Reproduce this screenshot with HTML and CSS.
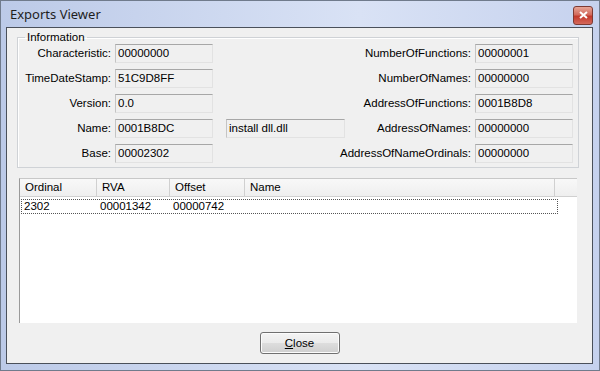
FILE: index.html
```html
<!DOCTYPE html>
<html lang="en">
<head>
    <meta charset="UTF-8">
    <title>Exports Viewer</title>
    <link rel="stylesheet" href="styles.css">
</head>
<body>
    <div class="window">
        <div class="titlebar">
            <span class="title">Exports Viewer</span>
            <div class="close-x">
                <svg width="9" height="8" viewBox="0 0 9 8">
                    <path d="M1 1 L8 7 M8 1 L1 7" stroke="#fff" stroke-width="2" />
                </svg>
            </div>
        </div>
        <div class="client">
            <fieldset class="info">
                <legend>Information</legend>
                <div class="fields">
                    <label>Characteristic:</label>
                    <div class="box">00000000</div>
                    <div></div>
                    <label>NumberOfFunctions:</label>
                    <div class="box">00000001</div>

                    <label>TimeDateStamp:</label>
                    <div class="box">51C9D8FF</div>
                    <div></div>
                    <label>NumberOfNames:</label>
                    <div class="box">00000000</div>

                    <label>Version:</label>
                    <div class="box">0.0</div>
                    <div></div>
                    <label>AddressOfFunctions:</label>
                    <div class="box">0001B8D8</div>

                    <label>Name:</label>
                    <div class="box">0001B8DC</div>
                    <div class="box wide">install dll.dll</div>
                    <label>AddressOfNames:</label>
                    <div class="box">00000000</div>

                    <label>Base:</label>
                    <div class="box">00002302</div>
                    <div></div>
                    <label>AddressOfNameOrdinals:</label>
                    <div class="box">00000000</div>
                </div>
            </fieldset>

            <div class="list">
                <div class="list-head">
                    <div class="col c-ord">Ordinal</div>
                    <div class="col c-rva">RVA</div>
                    <div class="col c-off">Offset</div>
                    <div class="col c-name">Name</div>
                    <div class="col c-stub"></div>
                </div>
                <div class="list-row">
                    <div class="col c-ord">2302</div>
                    <div class="col c-rva">00001342</div>
                    <div class="col c-off">00000742</div>
                    <div class="col c-name"></div>
                </div>
            </div>

            <div class="footer">
                <button class="btn"><u>C</u>lose</button>
            </div>
        </div>
    </div>
</body>
</html>
```

FILE: styles.css
```css
body {
    margin: 0;
    font-family: "Liberation Sans", Arial, sans-serif;
    font-size: 11.5px;
    color: #000;
}
.window {
    width: 600px;
    height: 371px;
    box-sizing: border-box;
    display: flex;
    flex-direction: column;
    padding: 0 6px 6px 5px;
    border: 1px solid #707b8c;
    background: linear-gradient(to right, #bccae8, #d9e2f5 60%, #c6d2ee);
}
.titlebar {
    height: 26px;
    display: flex;
    align-items: center;
    justify-content: space-between;
    padding-left: 4px;
}
.title {
    font-family: "Noto Sans", sans-serif;
    font-size: 13px;
    color: #1e1e1e;
    padding-bottom: 1px;
}
.close-x {
    width: 18px;
    height: 17px;
    margin-top: 2px;
    border: 1px solid #7d3a33;
    border-radius: 3px;
    background: linear-gradient(#e7a596, #d26a5c 45%, #c3392c 55%, #d4695b);
    display: flex;
    align-items: center;
    justify-content: center;
}
.client {
    flex: 1;
    display: flex;
    flex-direction: column;
    border: 1px solid #4a505a;
    background-color: #f0f0f0;
}
.info {
    margin: 3px 13px 0 10px;
    padding: 0 5px 4px 0;
    border: 1px solid #cfd2d6;
    box-shadow: inset 1px 1px 0 #fff;
    min-width: 0;
}
.info legend {
    margin-left: 7px;
    padding: 0 2px;
    line-height: 13px;
}
.fields {
    display: grid;
    grid-template-columns: 97px 98px 132px 130px 98px;
    grid-auto-rows: 19px;
    row-gap: 6px;
}
.fields label {
    display: flex;
    justify-content: flex-end;
    padding-right: 4px;
    line-height: 19px;
    white-space: nowrap;
}
.box {
    box-sizing: border-box;
    height: 19px;
    line-height: 17px;
    padding-left: 2px;
    border: 1px solid #e2e2e2;
    border-top-color: #a7a7a7;
    border-left-color: #c4c4c4;
    white-space: nowrap;
}
.box.wide {
    width: 119px;
    justify-self: end;
}
.list {
    height: 145px;
    box-sizing: border-box;
    margin: 10px 15px 0 12px;
    background-color: #fff;
    border-left: 1px solid #9a9a9a;
    border-top: 1px solid #c8c8c8;
}
.list-head {
    display: flex;
    height: 17px;
    background: linear-gradient(#f8f8f8, #efefef);
    border-bottom: 1px solid #d0d0d0;
}
.list-head .col {
    border-right: 1px solid #d0d0d0;
    line-height: 17px;
}
.list-head .c-stub {
    border-right: none;
    flex: 1;
}
.col {
    box-sizing: border-box;
    padding-left: 5px;
    white-space: nowrap;
}
.c-ord { width: 77px; }
.c-rva { width: 73px; }
.c-off { width: 75px; }
.c-name { width: 310px; }
.list-row {
    display: flex;
    width: 537px;
    height: 15px;
    margin: 2px 0 0 1px;
    border: 1px dotted #555;
    box-sizing: border-box;
    line-height: 13px;
}
.list-row .col {
    padding-left: 2px;
}
.list-row .c-ord { width: 76px; }
.footer {
    display: flex;
    justify-content: center;
    margin-top: 9px;
}
.btn {
    width: 80px;
    height: 22px;
    font-family: "Liberation Sans", Arial, sans-serif;
    font-size: 11.5px;
    color: #000;
    border: 1px solid #707070;
    border-radius: 3px;
    background: linear-gradient(#f4f4f4, #ebebeb 50%, #dddddd 51%, #cfcfcf);
    box-shadow: inset 0 0 0 1px #fcfcfc;
    padding: 0;
}
```
